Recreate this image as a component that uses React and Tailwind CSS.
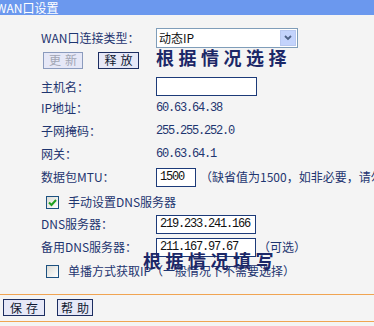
const cjk = { fontFamily: '"Noto Sans CJK SC", "Noto Sans", sans-serif' };
const mono = { fontFamily: '"Liberation Mono", "DejaVu Sans Mono", monospace' };

function Label({ children }) {
  return (
    <div className="w-[115px] shrink-0 text-[12px] leading-none text-[#1e3570] whitespace-nowrap" style={cjk}>
      {children}
    </div>
  );
}

function Value({ children }) {
  return (
    <span className="text-[12px] tracking-[-1.2px] text-[#1e3570]" style={mono}>
      {children}
    </span>
  );
}

function Field({ value, w }) {
  return (
    <div
      className={`${w} shrink-0 h-[19px] bg-white border border-[#1c3a78] flex items-center pl-[3px] text-[12px] tracking-[-1.2px] text-[#111] whitespace-nowrap overflow-hidden`}
      style={mono}
    >
      {value}
    </div>
  );
}

function Btn({ children, disabled }) {
  return (
    <div
      className={`h-[17px] flex items-center justify-center whitespace-nowrap text-[12px] leading-none tracking-[4px] pl-[4px] bg-[#e6e8f7] border ${
        disabled ? "border-[#8b9bbd] text-[#a2a6b4]" : "border-[#1c2d60] text-[#101830]"
      }`}
      style={cjk}
    >
      {children}
    </div>
  );
}

function Check({ checked }) {
  return (
    <div className="w-[13px] h-[13px] shrink-0 border border-[#1c5180] bg-gradient-to-br from-[#dcdcd6] to-white flex items-center justify-center">
      {checked && (
        <svg width="9" height="9" viewBox="0 0 9 9">
          <path d="M1 4.5 L3.5 7 L8 2" fill="none" stroke="#21a121" strokeWidth="2" />
        </svg>
      )}
    </div>
  );
}

export default function App() {
  return (
    <div className="w-[374px] h-[326px] bg-[#f4f4f4] overflow-hidden relative" style={cjk}>
      <div className="h-[15px] bg-[#6b98ee] flex items-center overflow-hidden">
        <span className="text-[12px] leading-none text-white -ml-[4px] whitespace-nowrap">WAN口设置</span>
      </div>

      <div className="pl-[41px] flex flex-col">
        <div className="mt-[12px] h-[21px] flex items-center">
          <Label>WAN口连接类型：</Label>
          <div className="w-[142px] shrink-0 h-[20px] bg-white border border-[#7f9db9] flex items-center justify-between">
            <span className="pl-[2px] text-[12px] leading-none text-[#111]">动态IP</span>
            <div className="w-[16px] h-[16px] mr-[1px] bg-[#c3d3fc] border border-[#b8c8f0] flex items-center justify-center">
              <svg width="8" height="6" viewBox="0 0 8 6">
                <path d="M1 1 L4 4 L7 1" fill="none" stroke="#4d6185" strokeWidth="1.8" />
              </svg>
            </div>
          </div>
        </div>

        <div className="mt-[3px] h-[18px] flex items-center">
          <div className="w-[115px] shrink-0 flex items-center gap-[15px] pl-[2px]">
            <div className="w-[40px]"><Btn disabled>更新</Btn></div>
            <div className="w-[41px]"><Btn>释放</Btn></div>
          </div>
          <span className="text-[18px] font-bold leading-none tracking-[4.5px] text-[#1b2767] -mt-[6px] whitespace-nowrap">
            根据情况选择
          </span>
        </div>

        <div className="mt-[8px] h-[19px] flex items-center">
          <Label>主机名：</Label>
          <Field value="" w="w-[101px]" />
        </div>

        <div className="mt-[3px] h-[18px] flex items-center">
          <Label>IP地址：</Label>
          <Value>60.63.64.38</Value>
        </div>

        <div className="mt-[5px] h-[18px] flex items-center">
          <Label>子网掩码：</Label>
          <Value>255.255.252.0</Value>
        </div>

        <div className="mt-[4px] h-[19px] flex items-center">
          <Label>网关：</Label>
          <Value>60.63.64.1</Value>
        </div>

        <div className="mt-[4px] h-[20px] flex items-center">
          <Label>数据包MTU：</Label>
          <Field value="1500" w="w-[40px]" />
          <span className="ml-[4px] text-[12px] leading-none text-[#1e3570] whitespace-nowrap">
            （缺省值为1500，如非必要，请勿修改）
          </span>
        </div>

        <div className="mt-[6px] h-[18px] flex items-center pl-[5px] gap-[9px]">
          <Check checked />
          <span className="text-[12px] leading-none text-[#1e3570]">手动设置DNS服务器</span>
        </div>

        <div className="mt-[3px] h-[20px] flex items-center">
          <Label>DNS服务器：</Label>
          <Field value="219.233.241.166" w="w-[100px]" />
        </div>

        <div className="mt-[3px] h-[20px] flex items-center relative">
          <Label>备用DNS服务器：</Label>
          <Field value="211.167.97.67" w="w-[100px]" />
          <span className="ml-[2px] text-[12px] leading-none text-[#1e3570]">（可选）</span>
          <span className="absolute left-[102px] top-[14px] text-[18px] font-bold leading-none tracking-[4.5px] text-[#1b2767] whitespace-nowrap">
            根据情况填写
          </span>
        </div>

        <div className="mt-[5px] h-[18px] flex items-center pl-[5px] gap-[9px]">
          <Check />
          <span className="text-[12px] leading-none text-[#1e3570] whitespace-nowrap">
            单播方式获取IP（一般情况下不需要选择）
          </span>
        </div>
      </div>

      <div className="mt-[14px] h-[1px] bg-[#f0a452]" />
      <div className="mt-[3px] h-[19px] flex items-center pl-[3px] gap-[12px]">
        <div className="w-[42px]"><Btn>保存</Btn></div>
        <div className="w-[36px]"><Btn>帮助</Btn></div>
      </div>
      <div className="mt-[4px] h-[1px] bg-[#f0a452]" />
    </div>
  );
}
